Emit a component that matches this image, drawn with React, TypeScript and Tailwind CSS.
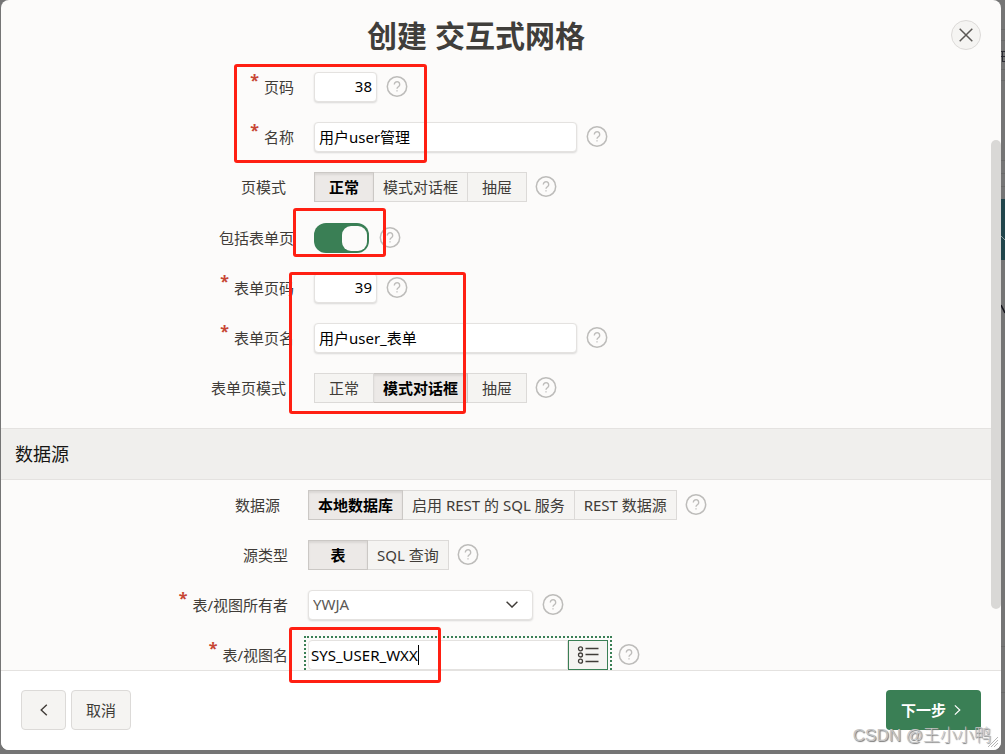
import type { ReactNode } from "react";

function Help() {
  return (
    <button type="button" aria-label="帮助" className="mx-2 size-[22px] shrink-0">
      <svg viewBox="0 0 22 22" className="size-[22px]" fill="none" stroke="#bdbcba">
        <circle cx="11" cy="10.500" r="9.700" strokeWidth="1.500" />
        <path d="M8.300 8.400a2.700 2.700 0 1 1 4.400 2.100c-1 .8-1.700 1.200-1.700 2.200" strokeWidth="1.400" />
        <circle cx="11" cy="14.900" r=".35" strokeWidth=".9" />
      </svg>
    </button>
  );
}

function Label({ htmlFor, id, text, required, inset }: { htmlFor?: string; id?: string; text: string; required?: boolean; inset?: boolean }) {
  const body = (
    <>
      {required && (
        <span aria-hidden="true" className="mr-[5px] self-start text-base leading-4 font-bold text-[#c74634]">*</span>
      )}
      <span className="leading-[30px]">{text}</span>
    </>
  );
  const cls = `flex h-[30px] flex-1 justify-end whitespace-nowrap text-[#403c38] ${inset ? "pr-7" : "pr-5"}`;
  return htmlFor ? <label htmlFor={htmlFor} className={cls}>{body}</label> : <div id={id} className={cls}>{body}</div>;
}

function Row({ label, children, narrow, tall }: { label: ReactNode; children: ReactNode; narrow?: boolean; tall?: boolean }) {
  return (
    <div className={`flex shrink-0 items-center ${tall ? "h-[31px]" : "h-[30px]"}`}>
      <div className={`flex shrink-0 ${narrow ? "w-[307px]" : "w-[313px]"}`}>{label}</div>
      {children}
      <Help />
    </div>
  );
}

function Segments({ name, labelId, options, value }: { name: string; labelId: string; options: string[]; value: string }) {
  return (
    <div role="radiogroup" aria-labelledby={labelId} className="flex h-[30px] bg-[#f5f4f2]">
      {options.map((o) => (
        <label
          key={o}
          className="relative flex min-w-[59px] items-center justify-center border border-l-0 border-[#dcdad8] px-[9px] text-[#403c38] first:min-w-[60px] first:border-l has-checked:border-[#cbc8c5] has-checked:bg-[#ece9e7] has-checked:font-bold has-checked:text-black has-checked:shadow-[inset_0_2px_2px_rgba(0,0,0,0.08)]"
        >
          <input type="radio" name={name} defaultChecked={o === value} className="sr-only" />
          {o}
        </label>
      ))}
    </div>
  );
}

const field = "h-[30px] rounded-sm border border-[#e4e2e0] bg-white px-1 pb-0.5 shadow-[0_1px_2px_rgba(0,0,0,0.14)] outline-none";
const mark = "pointer-events-none absolute rounded-[3px] border-3 border-[#ff1f12]";

export default function App() {
  return (
    <div className="relative flex h-screen overflow-hidden bg-[#757575] pb-1 pl-px font-['Noto_Sans','Noto_Sans_CJK_SC',sans-serif] text-[15px]">
      <main className="flex min-w-0 flex-1 flex-col overflow-hidden rounded-lg bg-[#fcfbfa]">
        <header className="flex h-15 shrink-0 items-center pt-2.5 pr-5">
          <h1 className="flex-1 pt-0.5 text-center text-3xl font-bold text-[#403e3b]">创建 交互式网格</h1>
          <button type="button" aria-label="关闭" className="flex size-[30px] items-center justify-center rounded-full border border-[#dcdad8] bg-[#f5f4f2]">
            <svg viewBox="0 0 14 14" className="size-3.5" fill="none" stroke="#5b5855" strokeWidth="1.5">
              <path d="M.7.7l12.600 12.600M13.300.7L.7 13.300" />
            </svg>
          </button>
        </header>

        <div className="flex min-h-0 flex-1">
          <form className="flex min-w-0 flex-1 flex-col overflow-hidden">
            <section className="flex flex-col gap-5 pt-3 pb-[25px]">
              <Row label={<Label htmlFor="page" text="页码" required />}>
                <input id="page" defaultValue="38" className={`${field} mr-px w-[63px] text-right text-black`} />
              </Row>
              <Row label={<Label htmlFor="name" text="名称" required />}>
                <input id="name" defaultValue="用户user管理" className={`${field} mr-px w-[263px] text-black`} />
              </Row>
              <Row label={<Label id="mode" text="页模式" inset />}>
                <Segments name="mode" labelId="mode" options={["正常", "模式对话框", "抽屉"]} value="正常" />
              </Row>
              <Row tall label={<Label htmlFor="include" text="包括表单页" />}>
                <input
                  id="include"
                  type="checkbox"
                  role="switch"
                  defaultChecked
                  className="mr-0.5 h-[30px] w-[55px] appearance-none self-end rounded-xl bg-[#3a7f55] pt-[3px] pl-7 before:block before:size-[25px] before:rounded-[9px] before:bg-[#fcfbfa]"
                />
              </Row>
              <Row label={<Label htmlFor="form-page" text="表单页码" required />}>
                <input id="form-page" defaultValue="39" className={`${field} mr-px w-[63px] text-right text-black`} />
              </Row>
              <Row label={<Label htmlFor="form-name" text="表单页名" required />}>
                <input id="form-name" defaultValue="用户user_表单" className={`${field} mr-px w-[263px] text-black`} />
              </Row>
              <Row label={<Label id="form-mode" text="表单页模式" inset />}>
                <Segments name="form-mode" labelId="form-mode" options={["正常", "模式对话框", "抽屉"]} value="模式对话框" />
              </Row>
            </section>

            <h2 className="flex h-[52px] shrink-0 items-center border-y border-[#e4e2e0] bg-[#f0efed] px-3.5 text-lg text-[#161513]">数据源</h2>

            <section className="flex flex-col gap-5 pt-2.5">
              <Row narrow label={<Label id="source" text="数据源" inset />}>
                <Segments name="source" labelId="source" options={["本地数据库", "启用 REST 的 SQL 服务", "REST 数据源"]} value="本地数据库" />
              </Row>
              <Row narrow label={<Label id="type" text="源类型" />}>
                <Segments name="type" labelId="type" options={["表", "SQL 查询"]} value="表" />
              </Row>
              <Row narrow label={<Label htmlFor="owner" text="表/视图所有者" required />}>
                <span className="relative mr-px flex">
                  <select id="owner" className={`${field} w-[225px] appearance-none text-[#5b5855]`}>
                    <option>YWJA</option>
                  </select>
                  <svg viewBox="0 0 12 7" className="pointer-events-none absolute top-[11px] right-[15px] h-[7px] w-3" fill="none" stroke="#403c38" strokeWidth="1.4">
                    <path d="M.6.7L6 6.100L11.400.7" />
                  </svg>
                </span>
              </Row>
              <Row narrow label={<Label htmlFor="table" text="表/视图名" required />}>
                <span className="-mr-0.5 -ml-1 flex h-[38px] shrink-0 items-center border-2 border-dotted border-[#3a7f55] px-0.5">
                  <span className="flex h-[30px] w-65 items-center rounded-l-sm border border-[#e4e2e0] bg-white pl-0.5">
                    <input id="table" defaultValue="SYS_USER_WXX" size={12} className="field-sizing-content bg-transparent text-black outline-none" />
                    <span className="h-5 w-px bg-black" />
                  </span>
                  <button type="button" aria-label="选择表" className="flex h-[30px] w-10 items-center justify-center border border-[#3a7f55] bg-[#f5f4f2]">
                    <svg viewBox="0 0 22 18" className="h-[18px] w-[22px]" fill="none" stroke="#403c38">
                      <circle cx="3.500" cy="2.800" r="2" strokeWidth="1.300" />
                      <circle cx="3.500" cy="9" r="2" strokeWidth="1.300" />
                      <circle cx="3.500" cy="15.200" r="2" strokeWidth="1.300" />
                      <path d="M8.500 2.500h13M8.500 8.500h13M8.500 15.500h13" strokeWidth="1.300" />
                    </svg>
                  </button>
                </span>
              </Row>
            </section>
          </form>
          <div aria-hidden="true" className="flex w-2.5 shrink-0 flex-col pt-20 pb-[61px]">
            <div className="flex-1 rounded-full bg-[#d9d8d6]" />
          </div>
        </div>

        <footer className="flex h-20 shrink-0 items-center gap-[5px] border-t border-[#e4e2e0] bg-white px-5 pb-px">
          <button type="button" aria-label="上一步" className="flex h-10 w-[45px] items-center justify-center rounded-sm border border-[#dcdad8] bg-[#f5f4f2]">
            <svg viewBox="0 0 8 12" className="h-3 w-2" fill="none" stroke="#403c38" strokeWidth="1.400">
              <path d="M6.800.7L1.200 6l5.600 5.300" />
            </svg>
          </button>
          <button type="button" className="h-10 w-15 rounded-sm border border-[#dcdad8] bg-[#f5f4f2] text-[#403c38]">取消</button>
          <button type="button" className="ml-auto flex h-10 items-center gap-2 rounded-sm bg-[#3a7f55] pr-5 pl-[15px] font-bold text-white">
            下一步
            <svg viewBox="0 0 8 12" className="h-3 w-[7px]" fill="none" stroke="currentColor" strokeWidth="1.400">
              <path d="M1 .7L6.600 6L1 11.300" />
            </svg>
          </button>
        </footer>
      </main>
      <svg aria-hidden="true" viewBox="0 0 4 750" className="h-[750px] w-1 shrink-0" fill="none">
        <path d="M0 29.500h4M0 40.500h4M0 69.500h4M0 80.500h4M0 160.500h4M0 173.500h4M0 186.500h4M0 646.500h4M0 692.500h4" stroke="#6a6a6a" />
        <path d="M0 51.500h4M1.500 51v11M0 56.500h4M2 61.500h2" stroke="#2c2c34" />
        <path d="M0 199h4v61H0z" fill="#21454b" />
        <path d="M0 236l4 4" stroke="#8b9b9d" />
        <path d="M0 305l4 8" stroke="#15151c" strokeWidth="1.500" />
      </svg>

      <div aria-hidden="true" className={`${mark} top-16 left-[234px] h-[99px] w-[193px]`} />
      <div aria-hidden="true" className={`${mark} top-52 left-[293px] h-[49px] w-[93px]`} />
      <div aria-hidden="true" className={`${mark} top-68 left-[289px] h-[142px] w-[177px]`} />
      <div aria-hidden="true" className={`${mark} top-[627px] left-[289px] h-14 w-[152px]`} />

      <p className="pointer-events-none absolute right-3.5 bottom-1 font-['Liberation_Sans','Noto_Sans_CJK_SC',sans-serif] text-[17px] leading-7 font-light whitespace-nowrap text-[#c4c4c4] [text-shadow:1px_1px_1px_#777]">
        CSDN @王小小鸭
      </p>
      <svg aria-hidden="true" viewBox="0 0 12 12" className="absolute right-1.5 bottom-1.5 size-3" stroke="#b5b5b5" strokeWidth="1">
        <path d="M1 11L11 1M4 11l7-7M7 11l4-4" />
      </svg>
    </div>
  );
}
